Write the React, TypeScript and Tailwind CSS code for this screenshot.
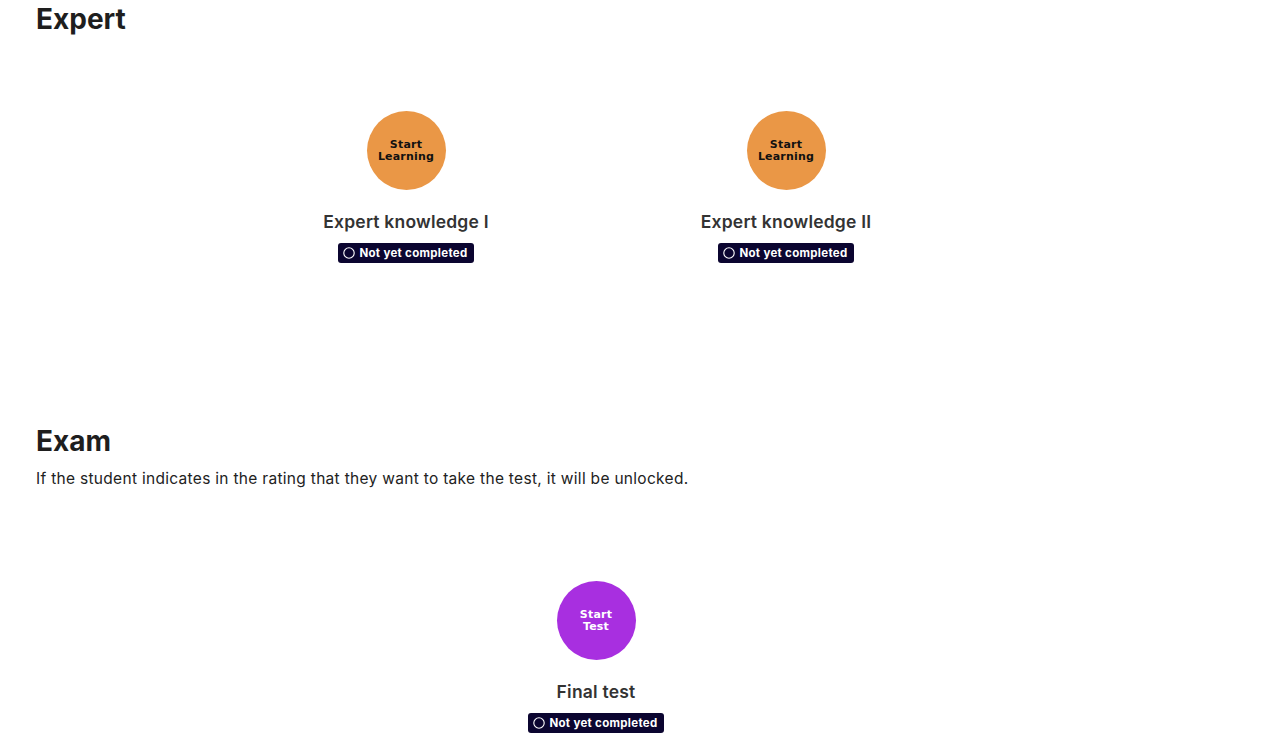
const font = { fontFamily: "Inter, 'Noto Sans', sans-serif" };

type Item = {
  title: string;
  label: [string, string];
  tone: "learn" | "test";
};

const expertItems: Item[] = [
  { title: "Expert knowledge I", label: ["Start", "Learning"], tone: "learn" },
  { title: "Expert knowledge II", label: ["Start", "Learning"], tone: "learn" },
];

const examItems: Item[] = [
  { title: "Final test", label: ["Start", "Test"], tone: "test" },
];

function StatusBadge() {
  return (
    <span className="mt-[11px] inline-flex h-5 items-center gap-[4px] rounded-[3px] bg-[#0b0530] pl-[5px] pr-[6px] text-[11.5px] leading-none font-bold tracking-[0.3px] text-white">
      <svg width="12" height="12" viewBox="0 0 12 12" aria-hidden="true">
        <circle cx="6" cy="6" r="5.2" fill="none" stroke="white" strokeWidth="1.1" />
      </svg>
      <span className="pt-px">Not yet completed</span>
    </span>
  );
}

function Node({ item }: { item: Item }) {
  const circle =
    item.tone === "learn"
      ? "bg-[#ea9746] text-[#111]"
      : "bg-[#a82fe0] text-white";
  return (
    <div className="flex w-[380px] flex-col items-center">
      <button
        type="button"
        className={`flex h-[79px] w-[79px] flex-col items-center justify-center rounded-full text-[11px] font-semibold leading-[12px] ${circle}`}
        style={{ fontFamily: "'DejaVu Sans', sans-serif", letterSpacing: "0.2px" }}
      >
        <span>{item.label[0]}</span>
        <span>{item.label[1]}</span>
      </button>
      <h3 className="mt-[22px] text-[17.5px] font-semibold leading-5 tracking-[0.2px] text-[#333]">
        {item.title}
      </h3>
      <StatusBadge />
    </div>
  );
}

export default function App() {
  return (
    <div className="min-h-screen bg-white pl-9" style={font}>
      <div className="w-[1120px]">
        <section>
          <h2 className="pt-[2px] text-[28px] font-bold leading-[34px] text-[#1e1e1e]">
            Expert
          </h2>
          <div className="mt-[75px] flex justify-center">
            {expertItems.map((item) => (
              <Node key={item.title} item={item} />
            ))}
          </div>
        </section>

        <section className="mt-[161px]">
          <h2 className="text-[28px] font-bold leading-[34px] text-[#1e1e1e]">
            Exam
          </h2>
          <p className="mt-[11px] text-[15.5px] leading-5 tracking-[0.3px] text-[#222]">
            If the student indicates in the rating that they want to take the
            test, it will be unlocked.
          </p>
          <div className="mt-[92px] flex justify-center">
            {examItems.map((item) => (
              <Node key={item.title} item={item} />
            ))}
          </div>
        </section>
      </div>
    </div>
  );
}
